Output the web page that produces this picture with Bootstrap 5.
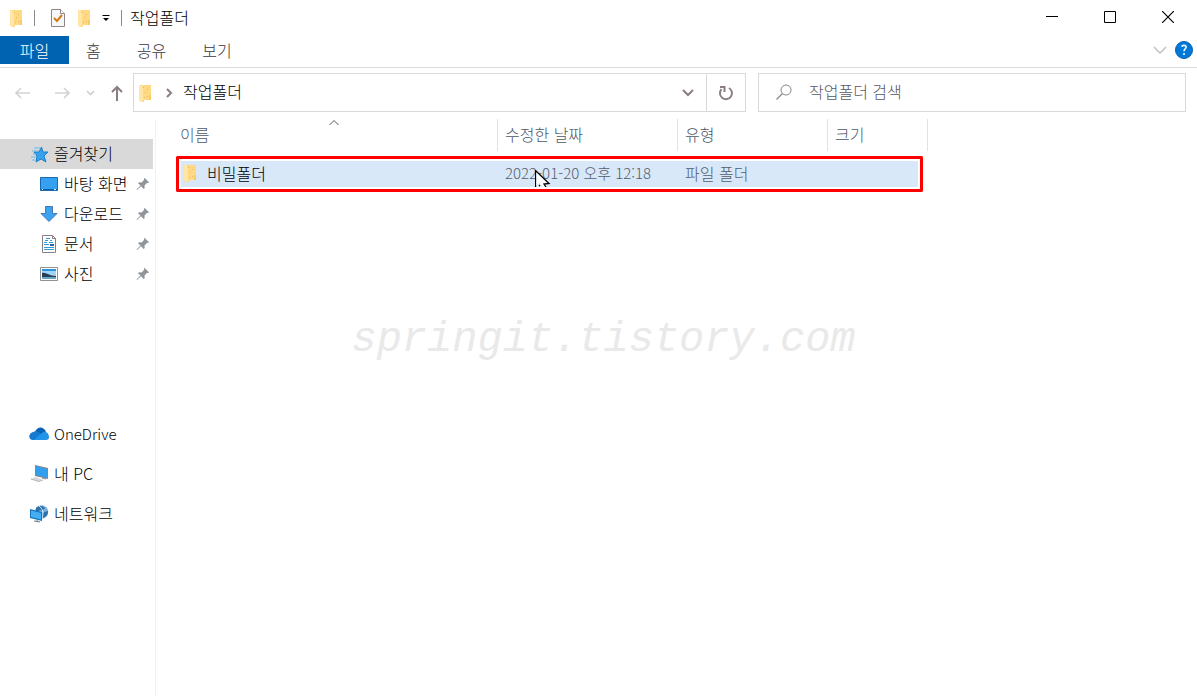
<!DOCTYPE html>
<html lang="ko">
<head>
<meta charset="utf-8">
<meta name="viewport" content="width=device-width, initial-scale=1">
<title>작업폴더</title>
<link href="https://cdn.jsdelivr.net/npm/bootstrap@5.3.0/dist/css/bootstrap.min.css" rel="stylesheet">
<style>
body{font-family:"Noto Sans CJK KR",sans-serif;font-size:16px;font-weight:300;line-height:22px;color:#000;background:#fff}
button{border:0;background:none;padding:0;color:inherit}
a{color:inherit;text-decoration:none}
svg{display:block;flex:none}
.latin{font-size:15px}
.titlebar{height:36px;padding-left:9px}
.title-text{padding-bottom:3px}
.quick{gap:11px}
.vline{width:1px;height:16px;background:#8a8a8a}
.win-btn{width:58px;height:34px}
.ribbon{height:32px;border-bottom:1px solid #dadbdc;color:#3b3440}
.file-tab{width:69px;height:28px;background:#0063b1;color:#fff}
.ribbon-tab{height:28px;padding:0 17px}
.ribbon-tabs{gap:2px}
.addressbar{padding:5px 11px 0 0;gap:12px}
.nav-tools{width:133px;padding-left:14px;margin-right:-12px}
.field{height:39px;border:1px solid #d9d9d9}
.crumb{padding-bottom:3px}
.refresh{width:39px;align-self:stretch;border-left:1px solid #d9d9d9}
.search{width:428px}
.search input{border:0;outline:0;background:none;color:#000;padding:0 0 3px;font-weight:300}
.search input::placeholder{color:#585863;opacity:1}
.explorer{padding-top:7px}
.sidebar{width:156px;border-right:1px solid #f1f1f1;padding-top:20px}
.sidebar a{height:30px;padding-left:29px;gap:5px}
.sidebar a.active{background:#d9d9d9;margin-right:2px}
.sidebar .pinned{padding-left:39px;padding-right:5px;gap:5px}
.sidebar span{padding-bottom:2px}
.places{padding-top:125px}
.sidebar .places a{height:40px}
.files{border-collapse:separate;border-spacing:0;table-layout:fixed;width:752px;margin-left:20px}
.files th{padding:0 0 5px;font-weight:300;color:#4c5768;position:relative}
.files th>div{height:32px;line-height:30px;border-right:1px solid #e2e2e2;padding-left:7px}
.files th:first-child>div{padding-left:4px}
.files th.open-end>div{border-right:0}
.sort{position:absolute;left:153px;top:0}
.files td{padding:2px 0;border:solid #f00;border-width:3px 0;background:#d8e8f8;background-clip:content-box;color:#545d6b}
.files td>div{height:26px;padding-left:7px;padding-bottom:2px;position:relative}
.files td:first-child{border-left-width:3px;padding-left:2px;border-radius:2px 0 0 2px}
.files td:first-child>div{padding-left:2px;gap:10px;color:#000}
.files td:last-child{border-right-width:3px;padding-right:2px;border-radius:0 2px 2px 0}
.pointer{position:absolute;left:37px;top:9px}
.watermark{position:absolute;top:198px;left:0;right:0;padding-left:10px;font:italic 42px/60px "Liberation Mono",monospace;color:#e9e9e9;pointer-events:none}
</style>
</head>
<body class="min-vh-100 d-flex flex-column">
<svg width="0" height="0" class="position-absolute" aria-hidden="true">
<symbol id="folder" viewBox="0 0 14 18"><path d="M1 1h12v10l-.500 1v4H6v2H3l-2-2z" fill="#ffd983"/><path d="M1 1h2l2 3v12l-1 2-3-2z" fill="#ffe6a6"/><path d="M11 11h2v5h-2z" fill="#f8cb65"/><path d="M5 3h1v1H5zm4 2h1v1H9zM7 8h1v1H7zm2 4h1v1H9zm-3 1h1v1H6z" fill="#e3b962"/></symbol>
<symbol id="pin" viewBox="0 0 14 14"><path d="M8.500 .8 13.200 5.500 12 6l-.8-.2-2.700 2.700.2 2.500-1 1L5 9.300 1 13l-.5-.5L4.500 8.500 2 6.200l1-1 2.600.2 2.600-2.600L8 1.700z" fill="#8f959b"/></symbol>
</svg>

<header>
<div class="titlebar d-flex align-items-center">
<div class="quick d-flex align-items-center me-2">
<svg width="14" height="18"><use href="#folder"/></svg>
<span class="vline me-1"></span>
<button type="button" aria-label="속성"><svg width="16" height="18" viewBox="0 0 16 18"><path d="M1.500.5h9l4 4v13h-13z" fill="#f7f7fa" stroke="#908488"/><path d="M10.500.5v4h4" fill="#fff" stroke="#908488"/><path d="m4 9 3 3 5-6" fill="none" stroke="#d47818" stroke-width="2"/></svg></button>
<button type="button" aria-label="새 폴더"><svg width="14" height="18"><use href="#folder"/></svg></button>
<button type="button" aria-label="사용자 지정"><svg width="8" height="8" viewBox="0 0 8 8"><path d="M.5 1h7v1h-7zM1 4h6L4 7z"/></svg></button>
<span class="vline"></span>
</div>
<span class="title-text">작업폴더</span>
<div class="d-flex ms-auto align-self-start">
<button type="button" class="win-btn d-flex align-items-center justify-content-center" aria-label="최소화"><svg width="12" height="12" viewBox="0 0 12 12"><path d="M0 5h12v1H0z"/></svg></button>
<button type="button" class="win-btn d-flex align-items-center justify-content-center" aria-label="최대화"><svg width="12" height="12" viewBox="0 0 12 12"><path d="M.5.5h11v11H.5z" fill="none" stroke="#000"/></svg></button>
<button type="button" class="win-btn d-flex align-items-center justify-content-center" aria-label="닫기"><svg width="12" height="12" viewBox="0 0 12 12"><path d="m0 0 12 12M12 0 0 12" stroke="#000" stroke-width="1.200"/></svg></button>
</div>
</div>
<nav class="ribbon d-flex">
<a href="#" class="file-tab d-flex align-items-center justify-content-center">파일</a>
<div class="ribbon-tabs d-flex">
<a href="#" class="ribbon-tab d-flex align-items-center">홈</a>
<a href="#" class="ribbon-tab d-flex align-items-center">공유</a>
<a href="#" class="ribbon-tab d-flex align-items-center">보기</a>
</div>
<div class="d-flex align-items-center ms-auto pe-1 pb-1 gap-2">
<button type="button" aria-label="리본 확장"><svg width="14" height="8" viewBox="0 0 14 8"><path d="m1 1 6 6 6-6" fill="none" stroke="#bfc3c3" stroke-width="1.500"/></svg></button>
<button type="button" aria-label="도움말"><svg width="18" height="18" viewBox="0 0 18 18"><circle cx="9" cy="9" r="8.500" fill="#0078d7" stroke="#0762b0"/><path d="M6.500 5.500Q9 3.500 11 5.200c1.300 1.700-2 2.800-2 5M9 12v2" fill="none" stroke="#e6f4ff" stroke-width="1.700"/></svg></button>
</div>
</nav>
<div class="addressbar d-flex">
<div class="nav-tools d-flex align-items-center">
<button type="button" aria-label="뒤로"><svg width="17" height="14" viewBox="0 0 17 14"><path d="M16 7H2m5-5L2 7l5 5" fill="none" stroke="#d3d3d3" stroke-width="1.700"/></svg></button>
<button type="button" class="ms-4 me-3" aria-label="앞으로"><svg width="15" height="14" viewBox="0 0 15 14"><path d="M0 7h14M9 2l5 5-5 5" fill="none" stroke="#d3d3d3" stroke-width="1.700"/></svg></button>
<button type="button" class="me-3" aria-label="최근 위치"><svg width="9" height="6" viewBox="0 0 9 6"><path d="m1 1 3.500 3.500L8 1" fill="none" stroke="#cfcfcf" stroke-width="1.700"/></svg></button>
<button type="button" aria-label="위로"><svg width="12" height="16" viewBox="0 0 12 16"><path d="M6 16V2M1 7l5-5 5 5" fill="none" stroke="#8b7d84" stroke-width="2"/></svg></button>
</div>
<div class="field d-flex align-items-center flex-fill ps-1">
<svg width="14" height="18"><use href="#folder"/></svg>
<svg class="mx-2 ps-1" width="15" height="10" viewBox="0 0 11 10"><path d="m3 1 4 4-4 4" fill="none" stroke="#8b7d84" stroke-width="2"/></svg>
<a href="#" class="crumb flex-fill">작업폴더</a>
<button type="button" class="me-2 pe-1" aria-label="이전 위치"><svg width="12" height="8" viewBox="0 0 12 8"><path d="m1 1 5 5 5-5" fill="none" stroke="#8b7d84" stroke-width="2"/></svg></button>
<button type="button" class="refresh d-flex align-items-center justify-content-center" aria-label="새로 고침"><svg width="16" height="16" viewBox="0 0 16 16"><path d="M11 3A6 6 0 1 1 3.500 4.200M2 2h4.500v5" fill="none" stroke="#8b7d84" stroke-width="2"/></svg></button>
</div>
<label class="field search d-flex align-items-center ps-3">
<svg width="18" height="18" viewBox="0 0 18 18"><circle cx="11" cy="6" r="5" fill="none" stroke="#83888a"/><path d="m7.500 9.500-6 6" stroke="#83888a" stroke-width="1.300"/></svg>
<input type="search" class="flex-fill ms-3" placeholder="작업폴더 검색" aria-label="작업폴더 검색">
</label>
</div>
</header>

<main class="explorer d-flex flex-fill position-relative">
<nav class="sidebar flex-shrink-0">
<a href="#" class="active d-flex align-items-center"><svg width="20" height="17" viewBox="0 0 20 17"><path d="m12.500 1 1.500 5h5l-4 4 2 6-5-3-5 3 1-6-3-4h5z" fill="#38a1ee" stroke="#1b7fc8"/><path d="M5 2h6M3 5h6M4 8h3M2 11h5M3 14h3" stroke="#69b9ef"/></svg><span>즐겨찾기</span></a>
<a href="#" class="pinned d-flex align-items-center"><svg width="20" height="14" viewBox="0 0 20 14"><path d="M1.500.5h17v13h-17z" fill="#33a0f0" stroke="#176ab1"/><path d="M2 12.500h16" stroke="#075c9e"/><path d="M3 12.500h1m11 0h2" stroke="#fff"/></svg><span>바탕 화면</span><svg class="ms-auto" width="14" height="14"><use href="#pin"/></svg></a>
<a href="#" class="pinned d-flex align-items-center"><svg width="20" height="18" viewBox="0 0 20 18"><path d="M6.500 1.500h7v7h4.500L10 16.500 2 8.500h4.500z" fill="#3ca2ee" stroke="#4579bb"/></svg><span>다운로드</span><svg class="ms-auto" width="14" height="14"><use href="#pin"/></svg></a>
<a href="#" class="pinned d-flex align-items-center"><svg width="20" height="18" viewBox="0 0 20 18"><path d="M3.500.5h10l3 3v14h-13z" fill="#fff" stroke="#8c7f83"/><path d="M13.500.5v3h3" fill="none" stroke="#8c7f83"/><path d="M7 3.500h4M6 5.500h3m2 0h2M5 7.500h3m2 0h4M5 9.500h5M5 12.500h10M5 14.500h10" stroke="#309bd8"/><path d="M11 9h4v2h-4z" fill="#346298"/></svg><span>문서</span><svg class="ms-auto" width="14" height="14"><use href="#pin"/></svg></a>
<a href="#" class="pinned d-flex align-items-center"><svg width="20" height="14" viewBox="0 0 20 14"><path d="M1.500.5h17v13h-17z" fill="#fff" stroke="#919195"/><path d="M3 2h14v10H3z" fill="#9fd5f5"/><path d="M3 2h14v2H3z" fill="#2d94dc"/><path d="M3 6c4-1 7 3 14 3v1H3z" fill="#293d55"/><path d="M3 10h14v2H3z" fill="#6da3c4"/></svg><span>사진</span><svg class="ms-auto" width="14" height="14"><use href="#pin"/></svg></a>
<div class="places">
<a href="#" class="d-flex align-items-center latin"><svg width="20" height="14" viewBox="0 0 20 14"><path d="M6 5c2-6 9-6 11 0l-5 5z" fill="#0863b5"/><path d="M4 13c-5 0-5-7 0-8 3-2 6 0 8 2l3 6z" fill="#147bd0"/><path d="M5 13 13 6c3-3 7 0 7 4 0 2-1 3-3 3z" fill="#2195e8"/></svg>OneDrive</a>
<a href="#" class="d-flex align-items-center"><svg width="20" height="18" viewBox="0 0 20 18"><path d="m6 0 13 3v11L6 11z" fill="#82858b"/><path d="m7 1 11 3v9L7 10z" fill="#329fee"/><path d="m1 14 6-2 7 3-4 2z" fill="#d8d8dc"/><path d="m2 14 8 2.500 4-1.500" fill="none" stroke="#bbb"/><path d="m13 13 4 1" stroke="#888" fill="none"/></svg><span>내 PC</span></a>
<a href="#" class="d-flex align-items-center"><svg width="20" height="18" viewBox="0 0 20 18"><circle cx="12.500" cy="7" r="6.700" fill="#7db0de"/><path d="M7 3c3-3 7-2 9 0l-3 3-2-1-2 2-2-1zM15 7l4-1c0 4-2 6-5 7l-1-3z" fill="#2d70ad"/><path d="M10 1q6 4 3 12" stroke="#d7effd" fill="none"/><path d="m1 4 12 3v9L1 13z" fill="#1675b9"/><path d="m2 5.500 10 2.500v6.500L2 12z" fill="#44aef5"/><path d="M8 15v2m-3-1 6 1" stroke="#777"/></svg><span>네트워크</span></a>
</div>
</nav>
<section class="flex-fill">
<table class="files">
<colgroup><col style="width:322px"><col style="width:180px"><col style="width:150px"><col style="width:95px"><col style="width:5px"></colgroup>
<thead><tr>
<th scope="col"><div>이름<svg class="sort" width="10" height="7" viewBox="0 0 10 7"><path d="m.5 6 4.500-4.500L9.500 6" fill="none" stroke="#555"/></svg></div></th>
<th scope="col"><div>수정한 날짜</div></th>
<th scope="col"><div>유형</div></th>
<th scope="col" class="open-end"><div>크기</div></th>
<th aria-hidden="true"><div class="p-0"></div></th>
</tr></thead>
<tbody><tr>
<td><div class="d-flex align-items-center"><svg width="14" height="18"><use href="#folder"/></svg>비밀폴더</div></td>
<td><div class="latin d-flex align-items-center">2022-01-20 오후 12:18<svg class="pointer" width="16" height="17" viewBox="0 0 16 17"><path d="M.5.500v15.500l4-3 3 4h4l-2-4 5 .2z" fill="#fff"/><path d="M.5 17V.5l13.500 13-5 .5 2 3M4 16l1-1" fill="none" stroke="#000" stroke-width="1.300"/></svg></div></td>
<td><div class="d-flex align-items-center">파일 폴더</div></td>
<td><div></div></td>
</tr></tbody>
</table>
</section>
<div class="watermark text-center">springit.tistory.com</div>
</main>
<script src="https://cdn.jsdelivr.net/npm/bootstrap@5.3.0/dist/js/bootstrap.bundle.min.js"></script>
</body>
</html>
